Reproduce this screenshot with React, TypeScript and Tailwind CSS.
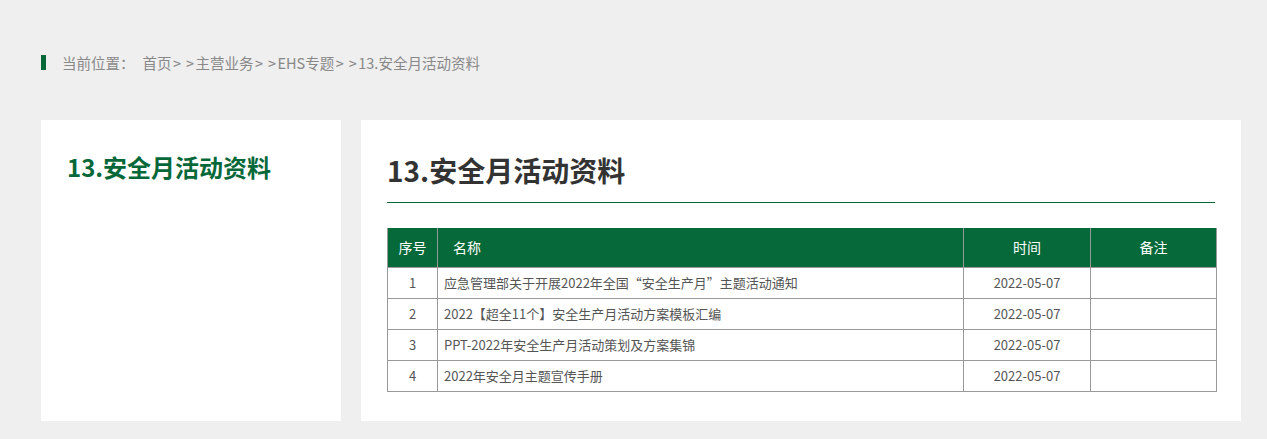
import React from 'react';

const rows = [
  { no: 1, name: '应急管理部关于开展2022年全国“安全生产月”主题活动通知', date: '2022-05-07' },
  { no: 2, name: '2022【超全11个】安全生产月活动方案模板汇编', date: '2022-05-07' },
  { no: 3, name: 'PPT-2022年安全生产月活动策划及方案集锦', date: '2022-05-07' },
  { no: 4, name: '2022年安全月主题宣传手册', date: '2022-05-07' },
];

const crumbs = ['首页', '主营业务', 'EHS专题', '13.安全月活动资料'];

const font = { fontFamily: '"Microsoft YaHei", "Noto Sans CJK SC", "Noto Sans", sans-serif' };

export default function App() {
  return (
    <div className="min-h-[439px] bg-[#efefef] px-[41px] pt-[54px] pb-[18px]" style={font}>
      {/* 面包屑 */}
      <div className="flex items-center h-[17px] text-[14.5px] leading-[17px] text-[#888]">
        <span className="w-[5px] h-[15px] bg-[#066839]" />
        <span className="ml-[16px]">当前位置：</span>
        <span className="ml-[8px] flex items-center">
          {crumbs.map((c, i) => (
            <React.Fragment key={c}>
              {i > 0 && (
                <span className="w-[24px] flex justify-center gap-[5px]">
                  <span>&gt;</span>
                  <span>&gt;</span>
                </span>
              )}
              <span>{c}</span>
            </React.Fragment>
          ))}
        </span>
      </div>

      <div className="mt-[49px] flex gap-[20px]">
        {/* 左侧 */}
        <div className="w-[300px] shrink-0 h-[301px] bg-white px-[26px] pt-[30px]">
          <h2 className="text-[24px] leading-[34px] font-bold text-[#066839]">13.安全月活动资料</h2>
        </div>

        {/* 右侧 */}
        <div className="w-[880px] shrink-0 h-[301px] bg-white px-[26px] pt-[31px]">
          <h1 className="text-[28px] leading-[38px] font-bold text-[#333] pb-[13px] border-b border-[#066839]">
            13.安全月活动资料
          </h1>

          <table className="mt-[25px] w-[829px] table-fixed border-collapse text-[13px]">
            <colgroup>
              <col className="w-[50px]" />
              <col className="w-[526px]" />
              <col className="w-[127px]" />
              <col className="w-[126px]" />
            </colgroup>
            <thead>
              <tr className="h-[39px] bg-[#066939] text-white text-[14px]">
                <th className="font-normal text-center border-x border-[#999]">序号</th>
                <th className="font-normal text-left pl-[15px] border-x border-[#999]">名称</th>
                <th className="font-normal text-center border-x border-[#999]">时间</th>
                <th className="font-normal text-center border-x border-[#999]">备注</th>
              </tr>
            </thead>
            <tbody className="text-[#555]">
              {rows.map((r) => (
                <tr key={r.no} className="h-[31px]">
                  <td className="border border-[#999] text-center">{r.no}</td>
                  <td className="border border-[#999] pl-[6px] whitespace-nowrap">{r.name}</td>
                  <td className="border border-[#999] text-center">{r.date}</td>
                  <td className="border border-[#999]"></td>
                </tr>
              ))}
            </tbody>
          </table>
        </div>
      </div>
    </div>
  );
}
